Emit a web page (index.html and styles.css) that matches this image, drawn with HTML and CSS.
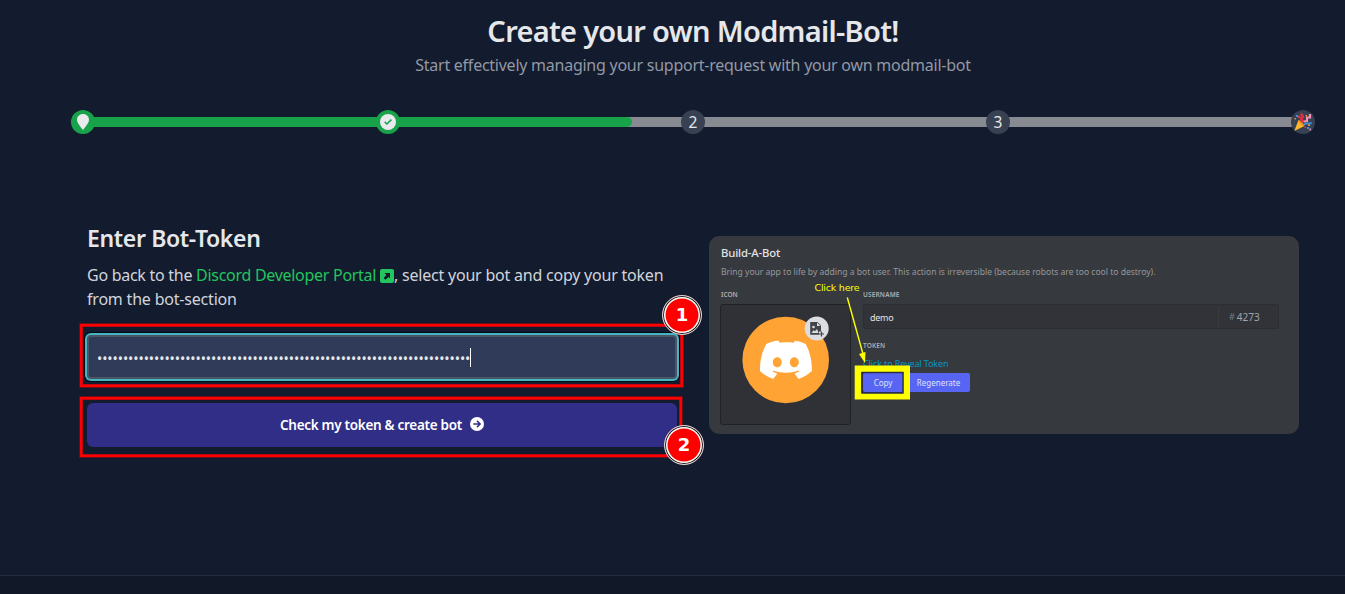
FILE: index.html
```html
<!DOCTYPE html>
<html lang="en">
<head>
<meta charset="utf-8">
<title>Create your own Modmail-Bot!</title>
<link rel="stylesheet" href="styles.css">
</head>
<body>
<main class="page">
  <header class="intro">
    <h1><span class="fit title-text">Create your own Modmail-Bot!</span></h1>
    <p><span class="fit lead-text">Start effectively managing your support-request with your own modmail-bot</span></p>
  </header>

  <div class="steps">
    <div class="track"><div class="fill"></div></div>
    <div class="step done"><svg width="24" height="24" viewBox="0 0 24 24"><path fill="#e8eaee" d="M12 4c3.500 0 6 2.500 6 5.700C18 13 14.500 16.500 12 20 9.500 16.500 6 13 6 9.700 6 6.500 8.500 4 12 4z"/></svg></div>
    <div class="step done"><svg width="24" height="24" viewBox="0 0 24 24"><circle cx="12" cy="12" r="8" fill="#e8eaee"/><path d="M8.700 11.900l2.200 2.100 4.500-4.400" fill="none" stroke="#18a34a" stroke-width="1.500"/></svg></div>
    <div class="step">2</div>
    <div class="step">3</div>
    <div class="step"><svg width="24" height="24" viewBox="0 0 24 24">
      <path fill="#fdb62f" d="M7.500 10l6 6L3.300 21z"/><path fill="#f28a24" d="M7.500 10c2 .3 5.500 3.500 6 6-2 .3-6-3.500-6-6z"/>
      <path fill="none" stroke="#dd2e44" stroke-width="3" d="M11.500 4c-3 1 2 2-.5 3.500-2 1.500 1 2.500 0 4.500"/>
      <path fill="none" stroke="#f293b5" stroke-width="2.200" d="M19 4v3.500h-3v3.500l-3.500.5"/>
      <path fill="none" stroke="#3b94d9" stroke-width="2" d="M12.500 14c2 1 2-1.500 4-.5s2 .5 4-1"/>
      <g fill="#3b94d9"><path d="M5 5h2v2H5z"/><path d="M16 17h2v2h-2z"/></g>
      <g fill="#f28a24"><path d="M3.500 8H5v1.500H3.500zM14.500 5H16v1.500h-1.500zM17 14.500h2v1.500h-2z"/></g>
      <g fill="#d83a4e"><path d="M13.500 16.500H15V18h-1.500zM7 6h2v2H7z"/></g><path fill="#f293b5" d="M18.500 18.500h1.500v2h-1.500z"/></svg></div>
  </div>

  <div class="columns">
    <section class="form">
      <h2><span class="fit heading-text">Enter Bot-Token</span></h2>
      <p class="help"><span class="fit go-text">Go back to the </span><a class="fit portal-text">Discord Developer Portal</a><svg class="external" width="14" height="14" viewBox="0 0 14 14"><rect width="14" height="14" rx="2" fill="#22c55e"/><path fill="#131b2e" d="M4.500 4H10v5.500L8.400 7.900 5.500 10.700 3.600 8.900 6.400 6z"/></svg><span class="fit select-text">, select your bot and copy your token</span><br><span class="fit section-text">from the bot-section</span></p>
      <div class="field">
        <div class="input"><span class="dots">••••••••••••••••••••••••••••••••••••••••••••••••••••••••••••••••••••••••</span><i class="caret"></i></div>
        <div class="outline outline-input"></div>
        <div class="badge badge-one">1</div>
      </div>
      <div class="field">
        <div class="button"><span class="fit button-text">Check my token &amp; create bot</span><svg width="14" height="14" viewBox="0 0 14 14"><circle cx="7" cy="7" r="7" fill="#fff"/><path d="M3.300 7h6.500M7 3.900L10.100 7 7 10.100" fill="none" stroke="#312e87" stroke-width="1.500"/></svg></div>
        <div class="outline outline-button"></div>
        <div class="badge badge-two">2</div>
      </div>
    </section>

    <section class="preview">
      <h3><span class="fit build-text">Build-A-Bot</span></h3>
      <p class="about"><span class="fit bring-text">Bring your app to life by adding a bot user. This action is irreversible (because robots are too cool to destroy).</span></p>
      <div class="settings">
        <div class="icon-column">
          <div class="label"><span class="fit">ICON</span></div>
          <div class="avatar-box">
            <svg width="129" height="119" viewBox="721 305 129 119">
              <circle cx="785.700" cy="360" r="43.300" fill="#ffa434"/>
              <path fill="#fff" fill-rule="evenodd" d="M778.500 340.800l-1.800-.1c-4 .6-7.500 1.800-10.500 3.300-3.900 7.500-6.500 16-6.200 27 4 3.700 8.300 6 13.200 8l4-5.200-4.800-2.500 1-.8c8 3 17 3 25 0l1 .8-4.800 2.500 4 5.200c4.900-2 9.200-4.300 13.300-8 .2-11-2.300-19.500-6.200-27-3-1.500-6.500-2.700-10.500-3.300l-1.800 2.100c-4.500-.6-9-.6-13.500 0zm-1.200 16.500c2.500 0 4.400 2.200 4.400 5s-1.900 5-4.400 5-4.500-2.200-4.500-5 2-5 4.500-5zm17 0c2.500 0 4.500 2.200 4.500 5s-2 5-4.500 5-4.400-2.200-4.400-5 1.900-5 4.400-5z"/>
              <circle cx="816.700" cy="328.600" r="12" fill="#dbdde1"/>
              <path fill="#404349" d="M810.200 322h7.300l3.500 3.500v6h-2v3.200h-8.800z"/><path fill="#dbdde1" d="M817 322.500v3.500h3.500z"/><circle cx="813.500" cy="327" r="1.300" fill="#dbdde1"/><path fill="#dbdde1" d="M811.500 333l2-2.800 1.500 1 2-2.200 1.500 4z"/><path stroke="#404349" stroke-width="1.200" d="M819 334h5M821.500 331.500v5"/>
            </svg>
          </div>
        </div>
        <div class="details">
          <div class="label"><span class="fit username-text">USERNAME</span></div>
          <div class="name-field"><span class="fit demo-text">demo</span><div class="tag"><span class="hash">#</span><span class="fit">4273</span></div></div>
          <div class="label token-label"><span class="fit username-text">TOKEN</span></div>
          <div class="reveal"><span class="fit reveal-text">Click to Reveal Token</span></div>
          <div class="actions"><div class="action copy"><span class="fit">Copy</span></div><div class="action regenerate"><span class="fit">Regenerate</span></div></div>
        </div>
      </div>
      <svg class="pointer" width="590" height="198" viewBox="709 236 590 198"><path d="M847.300 297.500L863 354" stroke="#ff0" stroke-width="1.400"/><path fill="#ff0" d="M859 354l6.500-2-.5 11z"/><path d="M858 368.700h48.700v27.600H858z" fill="none" stroke="#ff0" stroke-width="6.600"/><path d="M862 372.500h41v20.500h-41z" fill="none" stroke="#292b4c" stroke-width="1.300"/></svg>
      <div class="click"><span class="fit click-text">Click here</span></div>
    </section>
  </div>
</main>
<footer class="footer"></footer>
</body>
</html>
```
FILE: styles.css
```css
* { box-sizing: border-box; }
body { margin: 0; height: 594px; overflow: hidden; display: flex; flex-direction: column; background: #131b2e; color: #e5e7eb; font-family: "Noto Sans", "Open Sans", sans-serif; }
h1, h2, h3, p { margin: 0; }
.fit { white-space: pre; }
.page { height: 575px; padding: 12px 30px 0 71px; }
.footer { flex: 1; border-top: 1px solid #242e41; background: #111929; }
.intro { text-align: center; }
.intro h1 { font-size: 29px; line-height: 38px; font-weight: 650; }
.intro p { margin-top: 3px; font-size: 16px; line-height: 24px; color: #9298a5; }
.title-text { letter-spacing: -0.700px; }
.lead-text { letter-spacing: -0.25px; }

.steps { position: relative; display: flex; justify-content: space-between; height: 24px; margin-top: 33px; }
.track { position: absolute; left: 12px; right: 12px; top: 7px; height: 10px; background: #888a91; }
.fill { width: 45%; height: 10px; background: #18a34a; border-radius: 0 5px 5px 0; }
.step { position: relative; width: 24px; height: 24px; border-radius: 50%; background: #374151; font-size: 15.500px; line-height: 25px; text-align: center; }
.step svg { display: block; }
.done { background: #18a34a; }

.columns { display: grid; grid-template-columns: 590px 590px; gap: 32px; padding: 0 16px; margin-top: 88px; }
.form h2 { font-size: 23px; line-height: 32px; font-weight: 620; }
.heading-text { letter-spacing: -0.350px; }
.help { margin-top: 9px; height: 48px; font-size: 16px; line-height: 24px; color: #d1d5db; white-space: nowrap; }
.help a { color: #22c55e; }
.go-text { letter-spacing: -0.270px; }
.portal-text { letter-spacing: -0.290px; }
.select-text { letter-spacing: -0.220px; }
.section-text { letter-spacing: -0.200px; }
.external { vertical-align: -2px; margin-left: 4px; }
.field { position: relative; height: 44px; margin-top: 24px; }
.input { display: flex; align-items: center; height: 44px; padding-left: 8px; border: 2px solid #4b5563; border-radius: 4px; background: #2f3b59; box-shadow: 0 0 0 2px #45b5c4, 0 0 0 3px #060a12; }
.dots { padding-top: 4px; font-size: 14px; letter-spacing: -0.080px; line-height: 20px; white-space: nowrap; }
.caret { width: 1px; height: 19px; background: #fff; }
.button { display: flex; align-items: center; justify-content: center; gap: 8px; height: 44px; border-radius: 6px; background: #312e87; color: #fff; font-size: 13.500px; font-weight: 600; }
.button-text { padding-bottom: 1px; letter-spacing: -0.290px; }
.button svg { margin-bottom: 2px; }
.outline { position: absolute; border: 2px solid #f00; box-shadow: 0 0 0 1px #67101b, inset 0 0 0 1px #c00510; }
.outline-input { left: -7px; top: -11px; width: 603px; height: 63px; }
.outline-button { left: -7px; top: -6px; width: 602px; height: 60px; }
.badge { position: absolute; width: 40px; height: 40px; border-radius: 50%; background: #f00; border: 1px solid #ddd; box-shadow: inset 0 0 0 1px #111, inset 0 0 0 2.500px #fff; color: #fff; font: bold 18px/38px "DejaVu Sans", sans-serif; text-align: center; }
.badge-one { left: 575px; top: -40px; }
.badge-two { left: 577px; top: 22px; }

.preview { position: relative; height: 198px; margin-top: 14px; padding: 10px 20px 0 11px; border-radius: 10px; background: #36393e; color: #e2e3e5; }
.preview h3 { padding-left: 1px; font-size: 11.300px; line-height: 14px; font-weight: 500; }
.build-text { letter-spacing: -0.150px; }
.about { margin-top: 5px; padding-left: 1px; font-size: 8.600px; line-height: 14px; color: #96989c; white-space: nowrap; }
.bring-text { letter-spacing: -0.027px; }
.settings { display: grid; grid-template-columns: 131px 416px; gap: 12px; margin-top: 12px; }
.label { height: 8px; padding-left: 1px; font-size: 6.500px; line-height: 8px; font-weight: 600; color: #adafb3; }
.username-text { margin-left: -1px; letter-spacing: 0.150px; }
.avatar-box { height: 121px; margin-top: 5px; border: 1px solid #1f2125; border-radius: 3px; background: #303136; }
.avatar-box svg { display: block; }
.name-field { display: flex; align-items: center; justify-content: space-between; height: 25px; margin-top: 5px; padding-left: 6px; border: 1px solid #2c2e33; border-radius: 2px; background: #313338; font-size: 9px; }
.demo-text { padding-top: 1px; letter-spacing: -0.300px; }
.tag { display: flex; align-items: center; gap: 2px; width: 60px; height: 20px; padding-left: 10px; border-left: 1px solid #393b41; font-size: 10px; color: #a2a4a8; }
.hash { font-size: 9px; color: #777a80; }
.token-label { margin-top: 13px; }
.reveal { height: 12px; margin-top: 8px; font-size: 9px; line-height: 12px; color: #0794c6; }
.reveal-text { letter-spacing: -0.120px; }
.actions { display: flex; gap: 4px; margin-top: 3px; }
.action { height: 19px; border-radius: 2px; background: #5865f2; color: #dfe2ff; font-size: 8px; line-height: 19px; text-align: center; }
.copy { width: 40px; }
.regenerate { width: 63px; }
.pointer { position: absolute; left: 0; top: 0; }
.click { position: absolute; left: 105.500px; top: 46px; font: 9.500px/12px "DejaVu Sans", sans-serif; color: #ff0; }
.click-text { letter-spacing: -0.220px; }
```
